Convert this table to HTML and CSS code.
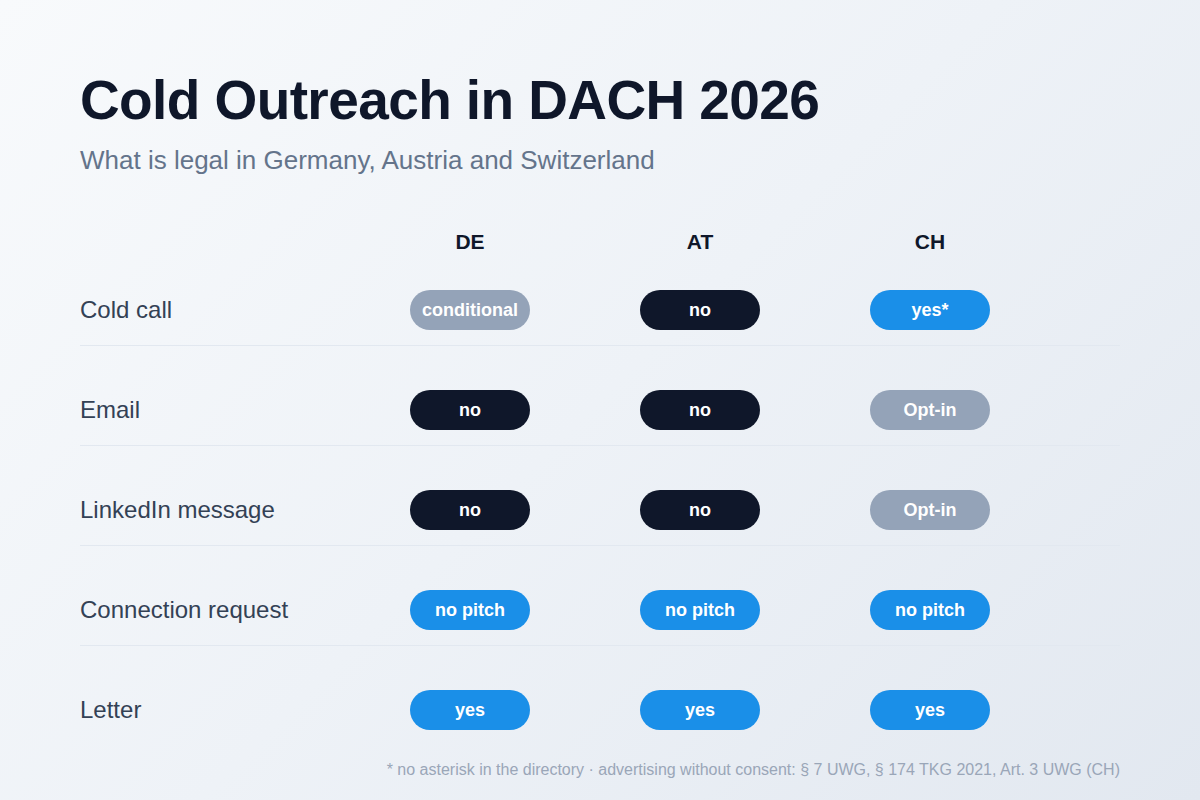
FILE: index.html
```html
<!DOCTYPE html>
<html lang="en">
<head>
<meta charset="utf-8">
<title>Cold Outreach in DACH 2026</title>
<link rel="stylesheet" href="styles.css">
</head>
<body>
<main class="page">
  <h1 class="title">Cold Outreach in DACH 2026</h1>
  <p class="subtitle">What is legal in Germany, Austria and Switzerland</p>

  <div class="table">
    <div class="row head">
      <div class="label"></div>
      <div class="cell">DE</div>
      <div class="cell">AT</div>
      <div class="cell">CH</div>
    </div>
    <div class="row">
      <div class="label">Cold call</div>
      <div class="cell"><span class="pill gray">conditional</span></div>
      <div class="cell"><span class="pill dark">no</span></div>
      <div class="cell"><span class="pill blue">yes*</span></div>
    </div>
    <div class="row">
      <div class="label">Email</div>
      <div class="cell"><span class="pill dark">no</span></div>
      <div class="cell"><span class="pill dark">no</span></div>
      <div class="cell"><span class="pill gray">Opt-in</span></div>
    </div>
    <div class="row">
      <div class="label">LinkedIn message</div>
      <div class="cell"><span class="pill dark">no</span></div>
      <div class="cell"><span class="pill dark">no</span></div>
      <div class="cell"><span class="pill gray">Opt-in</span></div>
    </div>
    <div class="row">
      <div class="label">Connection request</div>
      <div class="cell"><span class="pill blue">no pitch</span></div>
      <div class="cell"><span class="pill blue">no pitch</span></div>
      <div class="cell"><span class="pill blue">no pitch</span></div>
    </div>
    <div class="row last">
      <div class="label">Letter</div>
      <div class="cell"><span class="pill blue">yes</span></div>
      <div class="cell"><span class="pill blue">yes</span></div>
      <div class="cell"><span class="pill blue">yes</span></div>
    </div>
  </div>

  <p class="note">* no asterisk in the directory · advertising without consent: § 7 UWG, § 174 TKG 2021, Art. 3 UWG (CH)</p>
</main>
</body>
</html>
```

FILE: styles.css
```css
* { box-sizing: border-box; }

html, body {
  margin: 0;
  padding: 0;
}

body {
  width: 1200px;
  height: 800px;
  overflow: hidden;
  background: linear-gradient(135deg, #f8fafc 0%, #eef2f7 50%, #e2e8f0 100%);
  font-family: "Liberation Sans", Arial, Helvetica, sans-serif;
  color: #0f172a;
}

.page {
  padding: 70px 80px 0 80px;
  display: flex;
  flex-direction: column;
}

.title {
  margin: 0;
  font-size: 55px;
  line-height: 60px;
  font-weight: 700;
  color: #0f172a;
  letter-spacing: -0.6px;
}

.subtitle {
  margin: 15px 0 0 0;
  font-size: 26px;
  line-height: 30px;
  color: #64748b;
}

.table {
  margin-top: 55px;
  display: flex;
  flex-direction: column;
}

.row {
  display: grid;
  grid-template-columns: 275px 230px 230px 230px 1fr;
  align-items: center;
  height: 56px;
  padding-bottom: 15px;
  border-bottom: 1px solid #e2e8f0;
  margin-top: 44px;
}

.row.head {
  height: 24px;
  padding-bottom: 0;
  margin-top: 0;
  border-bottom: none;
  line-height: 24px;
}

.row.head + .row {
  margin-top: 36px;
}

.row.last {
  border-bottom: none;
  height: 55px;
}

.head .cell {
  font-size: 21px;
  font-weight: 700;
  color: #0f172a;
}

.label {
  font-size: 24px;
  line-height: 28px;
  color: #334155;
}

.cell {
  display: flex;
  justify-content: center;
}

.pill {
  display: flex;
  align-items: center;
  justify-content: center;
  width: 120px;
  height: 40px;
  border-radius: 20px;
  color: #ffffff;
  font-size: 18px;
  font-weight: 700;
}

.pill.gray { background: #94a3b8; }
.pill.dark { background: #0f172a; }
.pill.blue { background: #1a8fe8; }

.note {
  margin: 15px 0 0 0;
  width: 1040px;
  text-align: right;
  font-size: 16px;
  line-height: 20px;
  color: #9aa6b8;
}
```
